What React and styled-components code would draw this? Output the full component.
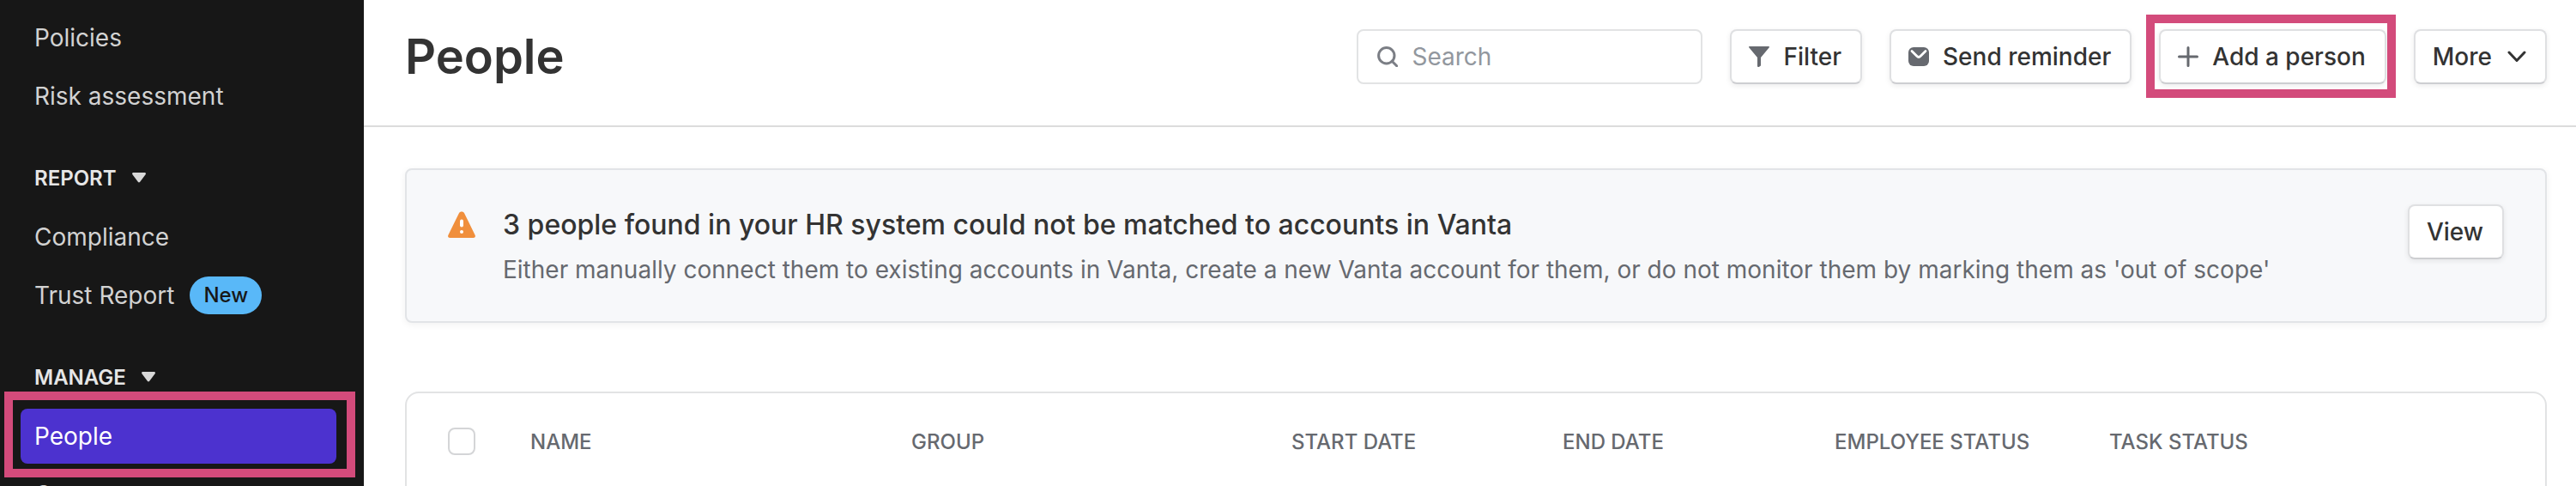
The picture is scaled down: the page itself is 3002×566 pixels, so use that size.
import React from "react";
import styled, { createGlobalStyle, css } from "styled-components";

const GlobalStyle = createGlobalStyle`
  * {
    box-sizing: border-box;
  }

  body {
    margin: 0;
    background: #ffffff;
    color: #333333;
    font-family: Inter, "Liberation Sans", sans-serif;
    overflow: hidden;
  }
`;

const Page = styled.div`
  display: flex;
  height: 100vh;
  overflow: hidden;
`;

const Sidebar = styled.nav`
  display: flex;
  flex-direction: column;
  flex: 0 0 424px;
  gap: 4px;
  padding: 12px 32px 0 24px;
  background: #171717;
  overflow: hidden;
`;

const highlight = css`
  position: relative;

  &::after {
    content: "";
    position: absolute;
    border: 10px solid #d34b7b;
    pointer-events: none;
  }
`;

const NavItem = styled.a`
  display: flex;
  align-items: center;
  flex: none;
  gap: 18px;
  height: 64px;
  padding: 0 16px;
  border-radius: 8px;
  font-size: 28px;
  text-decoration: none;
  color: ${(props) => (props.$active ? "#ffffff" : "#d2d2d2")};
  background: ${(props) => (props.$active ? "#4c32cf" : "transparent")};
`;

const NavHighlight = styled.div`
  ${highlight}
  flex: none;

  &::after {
    inset: -20px -22px -16px -19px;
  }
`;

const NavHeading = styled.button`
  display: flex;
  align-items: center;
  flex: none;
  gap: 18px;
  height: 40px;
  margin: 39px 0 13px;
  padding: 0 16px;
  border: 0;
  background: none;
  color: #e6e6e6;
  font: 600 24px Inter, sans-serif;
`;

const Badge = styled.span`
  padding: 0 16px;
  border-radius: 22px;
  background: #59b8f8;
  color: #171717;
  font-size: 24px;
  font-weight: 500;
  line-height: 44px;
`;

const Main = styled.main`
  flex: 1;
  min-width: 0;
`;

const Header = styled.header`
  display: flex;
  align-items: center;
  gap: 32px;
  padding: 34px 34px 48px 48px;
  border-bottom: 2px solid #dcdcdc;
`;

const Title = styled.h1`
  flex: 1;
  margin: 0;
  font-size: 56px;
  font-weight: 600;
  line-height: 64px;
`;

const SearchBox = styled.label`
  display: flex;
  align-items: center;
  gap: 16px;
  width: 403px;
  height: 64px;
  padding: 0 22px;
  border: 2px solid #e2e3e4;
  border-radius: 8px;
`;

const SearchInput = styled.input`
  flex: 1;
  min-width: 0;
  padding: 0;
  border: 0;
  outline: 0;
  font: 400 28px Inter, sans-serif;

  &::placeholder {
    color: #92979e;
    opacity: 1;
  }
`;

const Button = styled.button`
  display: flex;
  align-items: center;
  flex: none;
  gap: ${(props) => (props.$menu ? "18px" : "16px")};
  height: 64px;
  padding: 0 22px 0 20px;
  border: 2px solid #dfe0e2;
  border-bottom-color: #cdced1;
  border-radius: 8px;
  background: #ffffff;
  box-shadow: 0 2px 6px rgba(0, 0, 0, 0.08);
  color: #333333;
  font: 500 28px Inter, sans-serif;
`;

const ButtonHighlight = styled.div`
  ${highlight}

  &::after {
    inset: -17px -11px -16px -15px;
  }
`;

const Content = styled.div`
  display: flex;
  flex-direction: column;
  gap: 80px;
  padding: 48px 34px 0 48px;
`;

const Alert = styled.section`
  display: flex;
  align-items: flex-start;
  gap: 32px;
  padding: 40px 48px;
  border: 2px solid #e2e4e7;
  border-radius: 8px;
  background: #f7f8fa;
  box-shadow: 0 2px 8px rgba(0, 0, 0, 0.06);

  > svg {
    flex: none;
    margin-top: 8px;
  }
`;

const AlertText = styled.div`
  flex: 1;
`;

const AlertTitle = styled.h2`
  margin: 0 0 8px;
  font-size: 32px;
  font-weight: 500;
  line-height: 48px;
`;

const AlertBody = styled.p`
  margin: 0;
  color: #66696f;
  font-size: 28px;
  line-height: 40px;
`;

const TableCard = styled.div`
  min-height: 240px;
  border: 2px solid #e2e3e4;
  border-radius: 16px;
`;

const Table = styled.table`
  width: 100%;
  table-layout: fixed;
  border-collapse: collapse;
`;

const HeadCell = styled.th`
  width: ${(props) => (props.$width ? `${props.$width}px` : "auto")};
  height: 112px;
  padding: 0;
  color: #66696f;
  font-size: 24px;
  font-weight: 500;
  text-align: left;
`;

const Checkbox = styled.input`
  display: block;
  appearance: none;
  width: 32px;
  height: 32px;
  margin: 0 0 0 48px;
  border: 2px solid #d4d5d7;
  border-radius: 8px;
  background: #ffffff;
`;

const columns = [
  { label: "Name", width: 444 },
  { label: "Group", width: 443 },
  { label: "Start date", width: 316 },
  { label: "End date", width: 317 },
  { label: "Employee status", width: 320 },
  { label: "Task status" },
];

const CaretIcon = () => (
  <svg width="16" height="12" viewBox="0 0 16 12" fill="#d8d8d8">
    <path d="M1.4 0h13.2c1.2 0 1.8 1.4 1 2.3L9.2 10.8c-.6.8-1.8.8-2.4 0L.4 2.3C-.3 1.4.2 0 1.4 0z" />
  </svg>
);

const SearchIcon = () => (
  <svg width="24" height="24" viewBox="0 0 24 24" fill="none" stroke="#7b7e85" strokeWidth="3">
    <circle cx="10.8" cy="10.8" r="9.2" />
    <path d="M17.2 17.2l5.5 5.5" strokeLinecap="round" />
  </svg>
);

const FilterIcon = () => (
  <svg width="24" height="24" viewBox="0 0 24 24" fill="#66696f">
    <path d="M.7 0h22.6c.6 0 .9.7.5 1.2L14 13v9c0 .3-.1.6-.4.8l-1.8 1.1c-.8.5-1.8 0-1.8-.9V13L.2 1.2C-.2.7.1 0 .7 0z" />
  </svg>
);

const MailIcon = () => (
  <svg width="24" height="22" viewBox="0 0 24 22">
    <rect width="24" height="22" rx="6" fill="#66696f" />
    <path
      d="M4 4.5l5.8 5.8c1.3 1.3 3.1 1.3 4.4 0L20 4.5"
      fill="none"
      stroke="#fff"
      strokeWidth="2.8"
      strokeLinecap="round"
    />
  </svg>
);

const PlusIcon = () => (
  <svg width="24" height="24" viewBox="0 0 24 24" stroke="#66696f" strokeWidth="3" strokeLinecap="round">
    <path d="M12 1.5v21M1.5 12h21" />
  </svg>
);

const ChevronIcon = () => (
  <svg
    width="22"
    height="14"
    viewBox="0 0 22 14"
    fill="none"
    stroke="#333"
    strokeWidth="3"
    strokeLinecap="round"
    strokeLinejoin="round"
  >
    <path d="M2 2l9 9.5L20 2" />
  </svg>
);

const WarningIcon = () => (
  <svg width="32" height="32" viewBox="0 0 32 32">
    <path
      d="M12.8 2.4c1.4-2.6 5-2.6 6.4 0l12.4 25.4c.9 1.7-.1 3.2-1.9 3.2H2.3C.5 31-.5 29.5.4 27.8z"
      fill="#f08f3c"
    />
    <path d="M16 11.5v5" stroke="#fff" strokeWidth="4" strokeLinecap="round" />
    <circle cx="16" cy="24" r="2" fill="#fff" />
  </svg>
);

const App = () => {
  return (
    <>
      <GlobalStyle />
      <Page>
        <Sidebar>
          <NavItem href="#policies">Policies</NavItem>
          <NavItem href="#risk">Risk assessment</NavItem>
          <NavHeading>
            REPORT <CaretIcon />
          </NavHeading>
          <NavItem href="#compliance">Compliance</NavItem>
          <NavItem href="#trust">
            Trust Report <Badge>New</Badge>
          </NavItem>
          <NavHeading>
            MANAGE <CaretIcon />
          </NavHeading>
          <NavHighlight>
            <NavItem href="#people" $active>
              People
            </NavItem>
          </NavHighlight>
          <NavItem href="#computers">Computers</NavItem>
        </Sidebar>

        <Main>
          <Header>
            <Title>People</Title>
            <SearchBox>
              <SearchIcon />
              <SearchInput type="text" placeholder="Search" aria-label="Search" />
            </SearchBox>
            <Button>
              <FilterIcon /> Filter
            </Button>
            <Button>
              <MailIcon /> Send reminder
            </Button>
            <ButtonHighlight>
              <Button>
                <PlusIcon /> Add a person
              </Button>
            </ButtonHighlight>
            <Button $menu>
              More <ChevronIcon />
            </Button>
          </Header>

          <Content>
            <Alert>
              <WarningIcon />
              <AlertText>
                <AlertTitle>
                  3 people found in your HR system could not be matched to accounts in Vanta
                </AlertTitle>
                <AlertBody>
                  Either manually connect them to existing accounts in Vanta, create a new Vanta
                  account for them, or do not monitor them by marking them as 'out of scope'
                </AlertBody>
              </AlertText>
              <Button>View</Button>
            </Alert>

            {/* People table */}
            <TableCard>
              <Table>
                <thead>
                  <tr>
                    <HeadCell $width={144}>
                      <Checkbox type="checkbox" aria-label="Select all people" />
                    </HeadCell>
                    {columns.map((column) => (
                      <HeadCell key={column.label} $width={column.width} scope="col">
                        {column.label.toUpperCase()}
                      </HeadCell>
                    ))}
                  </tr>
                </thead>
              </Table>
            </TableCard>
          </Content>
        </Main>
      </Page>
    </>
  );
};

export default App;
